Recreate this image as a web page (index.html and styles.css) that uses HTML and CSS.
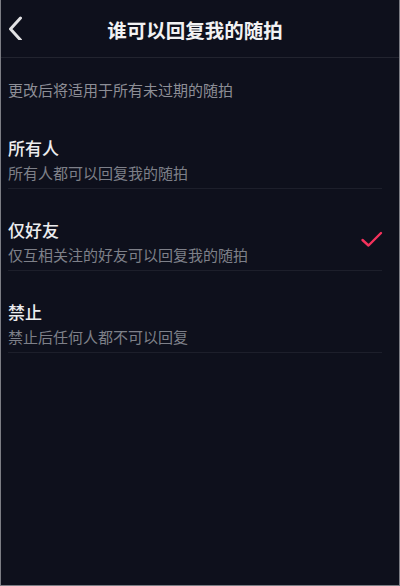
FILE: index.html
```html
<!DOCTYPE html>
<html lang="zh-CN">
<head>
<meta charset="utf-8">
<title>谁可以回复我的随拍</title>
<link rel="stylesheet" href="styles.css">
</head>
<body>
<div class="screen">
  <header class="nav">
    <svg class="back" width="24" height="30" viewBox="0 0 24 30">
      <polyline points="19.5,8 9.5,19 19.5,30" fill="none" stroke="#e2e2e4" stroke-width="3" stroke-linecap="round" stroke-linejoin="round"/>
    </svg>
    <h1 class="nav-title">谁可以回复我的随拍</h1>
  </header>
  <p class="hint">更改后将适用于所有未过期的随拍</p>
  <ul class="options">
    <li class="option">
      <div class="option-text">
        <div class="option-title">所有人</div>
        <div class="option-desc">所有人都可以回复我的随拍</div>
      </div>
    </li>
    <li class="option">
      <div class="option-text">
        <div class="option-title">仅好友</div>
        <div class="option-desc">仅互相关注的好友可以回复我的随拍</div>
      </div>
      <svg class="check" width="24" height="18" viewBox="0 0 24 18">
        <polyline points="2.5,9 8.5,14.5 21,2" fill="none" stroke="#f4325c" stroke-width="2.4" stroke-linecap="round" stroke-linejoin="round"/>
      </svg>
    </li>
    <li class="option">
      <div class="option-text">
        <div class="option-title">禁止</div>
        <div class="option-desc">禁止后任何人都不可以回复</div>
      </div>
    </li>
  </ul>
</div>
</body>
</html>
```
FILE: styles.css
```css
* { box-sizing: border-box; }
html, body {
  margin: 0;
  padding: 0;
  background: #0e101c;
}
.screen {
  width: 400px;
  height: 586px;
  background: #0e101c;
  border-left: 1px solid #7c7d84;
  border-right: 1px solid #7c7d84;
  border-bottom: 1px solid #7c7d84;
  font-family: "Noto Sans CJK SC", "Noto Sans", sans-serif;
  overflow: hidden;
}
.nav {
  position: relative;
  height: 58px;
  padding-right: 10px;
  border-bottom: 1px solid #22242f;
  display: flex;
  align-items: center;
  justify-content: center;
}
.back {
  position: absolute;
  left: 0;
  top: 10px;
}
.nav-title {
  margin: 0;
  font-size: 19.5px;
  font-weight: 700;
  color: #f2f2f3;
  line-height: 24px;
  padding-top: 2px;
}
.hint {
  margin: 0;
  padding: 22px 0 7px 7px;
  font-size: 15px;
  line-height: 20px;
  color: #8d8e96;
}
.options {
  list-style: none;
  margin: 0;
  padding: 0 17px 0 7px;
}
.option {
  display: flex;
  align-items: center;
  padding: 29px 0 2px 0;
  border-bottom: 1px solid #1d1f2b;
}
.option-text {
  flex: 1;
}
.option-title {
  font-size: 17px;
  line-height: 24px;
  font-weight: 500;
  color: #ececee;
}
.option-desc {
  font-size: 15px;
  line-height: 26px;
  color: #7e8089;
}
.check {
  margin-top: -6px;
  margin-right: -2px;
}
```
